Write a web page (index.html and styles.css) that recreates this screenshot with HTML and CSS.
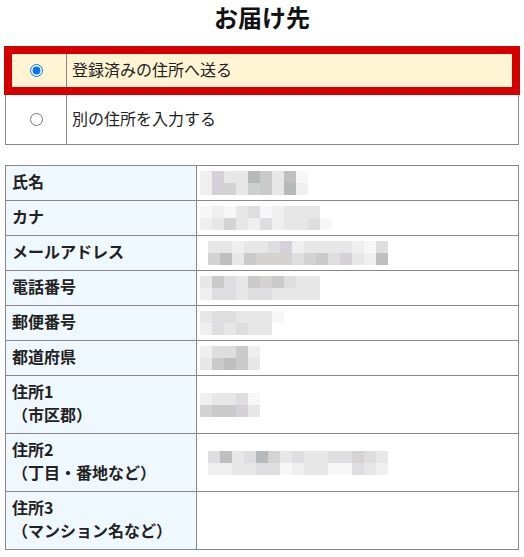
FILE: index.html
```html
<!DOCTYPE html>
<html>
<head>
    <title>お届け先</title>
    <link rel="stylesheet" href="styles.css">
</head>
<body>
    <h1 class="title">お届け先</h1>

    <div class="choice">
        <label class="opt opt-on">
            <span class="opt-radio"><input type="radio" name="dest" checked></span>
            <span class="opt-text">登録済みの住所へ送る</span>
        </label>
        <label class="opt">
            <span class="opt-radio"><input type="radio" name="dest"></span>
            <span class="opt-text">別の住所を入力する</span>
        </label>
    </div>

    <div class="info">
        <div class="info-key">氏名</div>
        <div class="info-val"><div class="mz" data-p="bpcchfcga/bpecqfchb"></div></div>

        <div class="info-key">カナ</div>
        <div class="info-val"><div class="mz" data-p="abacdabcccoo/bcecbdbccdao"></div></div>

        <div class="info-key">メールアドレス</div>
        <div class="info-val"><div class="mz shift" data-p="ccbccdpbccccbad/egcfeeedefdpcbg"></div></div>

        <div class="info-key">電話番号</div>
        <div class="info-val"><div class="mz" data-p="cfdcfefdcc/bddcddcccc"></div></div>

        <div class="info-key">郵便番号</div>
        <div class="info-val"><div class="mz" data-p="cddccca/bdcdcco"></div></div>

        <div class="info-key">都道府県</div>
        <div class="info-val"><div class="mz" data-p="bddfb/cfgfc"></div></div>

        <div class="info-key">住所1<br>（市区郡）</div>
        <div class="info-val"><div class="mz" data-p="bccda/effpc"></div></div>

        <div class="info-key">住所2<br>（丁目・番地など）</div>
        <div class="info-val"><div class="mz shift" data-p="dgcdhecdccddedc/bbccddabccaadcb"></div></div>

        <div class="info-key">住所3<br>（マンション名など）</div>
        <div class="info-val"></div>
    </div>

    <script>
        // ぼかし部分のモザイクを作る
        document.querySelectorAll('.mz').forEach(function (el) {
            el.dataset.p.split('/').forEach(function (row) {
                var line = document.createElement('div');
                line.className = 'mz-row';
                for (var i = 0; i < row.length; i++) {
                    var cell = document.createElement('span');
                    cell.className = 'mz-' + row[i];
                    line.appendChild(cell);
                }
                el.appendChild(line);
            });
        });
    </script>
</body>
</html>
```

FILE: styles.css
```css
body { margin: 0; font-family: "Noto Sans CJK JP", "Noto Sans", sans-serif; color: #222; background: #fff; }
.title { margin: 0 0 11px; padding-bottom: 2px; font-size: 24px; line-height: 33px; font-weight: bold; text-align: center; color: #111; }

.choice { width: 514px; margin: 0 5px; }
.opt { display: flex; height: 50px; box-sizing: border-box; border: 1px solid #888; border-top: none; font-size: 16px; }
.opt-on { height: 49px; margin: 0 -1px; border: 8px solid #d40000; background: #fff5d4; }
.opt-radio { display: flex; align-items: center; width: 61px; padding-left: 24px; box-sizing: border-box; border-right: 1px solid #888; }
.opt-on .opt-radio { width: 55px; padding-left: 18px; }
.opt-radio input { margin: 0; }
.opt-text { display: flex; align-items: center; padding: 0 0 4px 5px; }

.info { display: grid; grid-template-columns: 191px 322px; margin: 20px 5px 0; border-top: 1px solid #888; border-left: 1px solid #888; }
.info-key { padding: 4px 6px 7px; font-size: 16px; line-height: 23px; font-weight: bold; background: #f0f8ff; border-right: 1px solid #888; border-bottom: 1px solid #888; }
.info-val { display: flex; align-items: center; padding-left: 3px; border-right: 1px solid #888; border-bottom: 1px solid #888; }

.mz.shift { margin-left: 8px; }
.mz-row { display: flex; }
.mz-row span { display: block; width: 12px; height: 12px; }
.mz-o { background: transparent; }
.mz-a { background: #f7f7f7; }
.mz-b { background: #efefef; }
.mz-c { background: #e7e7e8; }
.mz-d { background: #dedee0; }
.mz-e { background: #d4d3d2; }
.mz-f { background: #cacaca; }
.mz-g { background: #bfbfc0; }
.mz-h { background: #b5b9b9; }
.mz-p { background: #d6d0d8; }
.mz-q { background: #cbd1cf; }
```
